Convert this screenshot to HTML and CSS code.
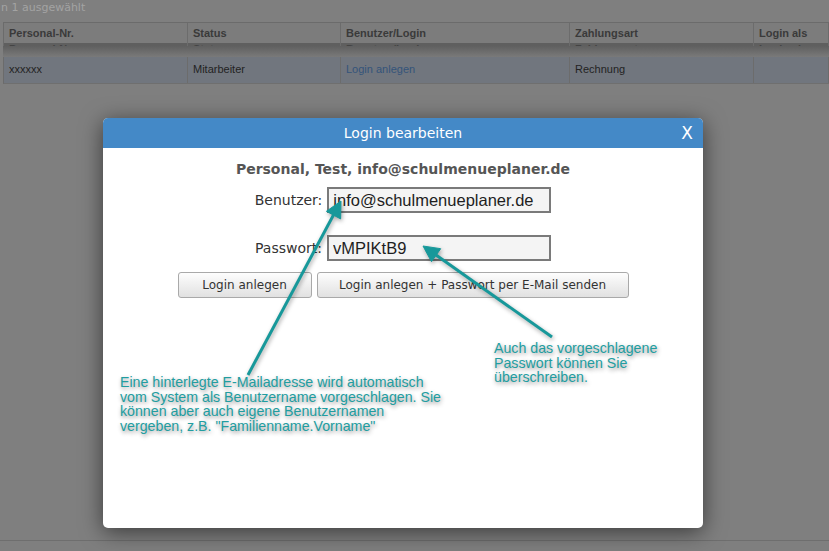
FILE: index.html
```html
<!DOCTYPE html>
<html lang="de">
<head>
  <meta charset="UTF-8" />
  <title>Login bearbeiten</title>
  <link rel="stylesheet" href="styles.css">
</head>
<body>
  <div class="page">
    <div class="selection-info">n 1 ausgewählt</div>
    <div class="grid">
      <div class="grid-head">
        <div class="cell">Personal-Nr.</div>
        <div class="cell">Status</div>
        <div class="cell">Benutzer/Login</div>
        <div class="cell">Zahlungsart</div>
        <div class="cell">Login als</div>
      </div>
      <div class="grid-head ghost">
        <div class="cell">Personal-Nr.</div>
        <div class="cell">Status</div>
        <div class="cell">Benutzer/Login</div>
        <div class="cell">Zahlungsart</div>
        <div class="cell">Login als</div>
      </div>
      <div class="grid-shadow"></div>
      <div class="grid-row selected">
        <div class="cell">xxxxxx</div>
        <div class="cell">Mitarbeiter</div>
        <div class="cell"><a class="link">Login anlegen</a></div>
        <div class="cell">Rechnung</div>
        <div class="cell"></div>
      </div>
    </div>
    <div class="page-footer"></div>
  </div>

  <div class="dialog">
    <div class="dialog-title">
      Login bearbeiten
      <span class="dialog-close">X</span>
    </div>
    <div class="dialog-body">
      <h3>Personal, Test, info@schulmenueplaner.de</h3>
      <div class="form-row">
        <label for="user">Benutzer:</label>
        <input id="user" type="text" value="info@schulmenueplaner.de">
      </div>
      <div class="form-row second">
        <label for="pass">Passwort:</label>
        <input id="pass" type="text" value="vMPIKtB9">
      </div>
      <div class="dialog-buttons">
        <button class="btn btn-create">Login anlegen</button>
        <button class="btn btn-mail">Login anlegen + Passwort per E-Mail senden</button>
      </div>
    </div>
  </div>

  <!-- help annotations drawn over the dialog -->
  <svg class="arrows" width="829" height="551" viewBox="0 0 829 551">
    <g fill="#17989a" stroke="#17989a">
      <line x1="248" y1="375" x2="334" y2="214" stroke-width="3" />
      <polygon points="341,201 340.6,218.9 326.4,211.3" stroke-width="1" stroke-linejoin="round" />
      <line x1="552" y1="337" x2="436" y2="255" stroke-width="3" />
      <polygon points="423,246 440.7,248.7 431.5,261.7" stroke-width="1" stroke-linejoin="round" />
    </g>
  </svg>
  <div class="note note-user">
    Eine hinterlegte E-Mailadresse wird automatisch<br>
    vom System als Benutzername vorgeschlagen. Sie<br>
    können aber auch eigene Benutzernamen<br>
    vergeben, z.B. "Familienname.Vorname"
  </div>
  <div class="note note-pass">
    Auch das vorgeschlagene<br>
    Passwort können Sie<br>
    überschreiben.
  </div>
</body>
</html>
```

FILE: styles.css
```css
body {
  margin: 0;
  background-color: #7f7f7f;
  font-family: 'DejaVu Sans', sans-serif;
  height: 551px;
  overflow: hidden;
  position: relative;
}

.page {
  display: flex;
  flex-direction: column;
  height: 551px;
}

.selection-info {
  height: 22px;
  padding-left: 1px;
  font-size: 11px;
  line-height: 15px;
  color: #a3a3a3;
}

.grid {
  margin-left: 3px;
  font-family: 'Liberation Sans', Arial, sans-serif;
  font-size: 11px;
}

.grid-head,
.grid-row {
  display: grid;
  grid-template-columns: 184px 153px 229px 184px 1fr;
  border-left: 1px solid #6b6b6b;
}

.grid-head {
  border-top: 1px solid #6b6b6b;
  background-color: #7c7c7c;
  height: 20px;
  font-weight: bold;
  color: #3a3a3a;
}

.cell {
  padding-left: 5px;
  border-right: 1px solid #6c6c6c;
  line-height: 20px;
  white-space: nowrap;
  overflow: hidden;
}

.grid-head.ghost {
  border-top: none;
  height: 3px;
  overflow: hidden;
  background-color: #5f5f5f;
}

.grid-head.ghost .cell {
  line-height: 13px;
  color: #444;
}

.grid-shadow {
  height: 11px;
  background: linear-gradient(#5f5f5f, #7a7a7a);
}

.grid-row {
  height: 26px;
  border-bottom: 1px solid #6f6f6f;
  color: #232323;
}

.grid-row .cell {
  line-height: 25px;
}

.grid-row.selected {
  background-color: #71767e;
}

.link {
  color: #34547a;
}

.page-footer {
  margin-top: auto;
  height: 10px;
  border-top: 1px solid #6e6e6e;
}

.dialog {
  position: absolute;
  left: 103px;
  top: 118px;
  width: 600px;
  height: 410px;
  background-color: #fff;
  border-radius: 5px;
  overflow: hidden;
  box-shadow: 0 4px 22px rgba(0, 0, 0, 0.55);
}

.dialog-title {
  position: relative;
  height: 30px;
  line-height: 30px;
  background-color: #4489c7;
  color: #fff;
  text-align: center;
  font-size: 14px;
}

.dialog-close {
  position: absolute;
  right: 10px;
  top: 0;
  font-size: 17px;
}

.dialog-body {
  text-align: center;
}

.dialog-body h3 {
  margin: 12px 0 0;
  font-size: 14px;
  line-height: 18px;
  color: #555;
}

.form-row {
  display: flex;
  justify-content: center;
  align-items: center;
  gap: 5px;
  margin-top: 9px;
  font-size: 14px;
  color: #333;
}

.form-row.second {
  margin-top: 22px;
}

.form-row input {
  box-sizing: border-box;
  width: 224px;
  height: 26px;
  margin: 0;
  padding: 0 4px;
  border: 2px solid #7a7a7a;
  background-color: #f4f4f4;
  font-family: 'Liberation Sans', Arial, sans-serif;
  font-size: 16.5px;
  color: #1e1e1e;
}

.dialog-buttons {
  display: flex;
  justify-content: center;
  gap: 5px;
  margin-top: 11px;
}

.btn {
  height: 26px;
  padding: 0;
  border: 1px solid #a9a9a9;
  border-radius: 3px;
  background: linear-gradient(#fdfdfd, #e1e1e1);
  font-family: 'DejaVu Sans', sans-serif;
  font-size: 12px;
  color: #333;
}

.btn-create {
  width: 134px;
}

.btn-mail {
  width: 312px;
}

.arrows {
  position: absolute;
  left: 0;
  top: 0;
  pointer-events: none;
  filter: drop-shadow(1px 2px 2px rgba(0, 0, 0, 0.35));
}

.note {
  position: absolute;
  font-family: 'Liberation Sans', Arial, sans-serif;
  font-size: 14.2px;
  line-height: 14.6px;
  color: #229da0;
  text-shadow: 1px 2px 4px rgba(0, 0, 0, 0.45);
  white-space: nowrap;
}

.note-user {
  left: 120px;
  top: 375px;
}

.note-pass {
  left: 494px;
  top: 341px;
}
```
